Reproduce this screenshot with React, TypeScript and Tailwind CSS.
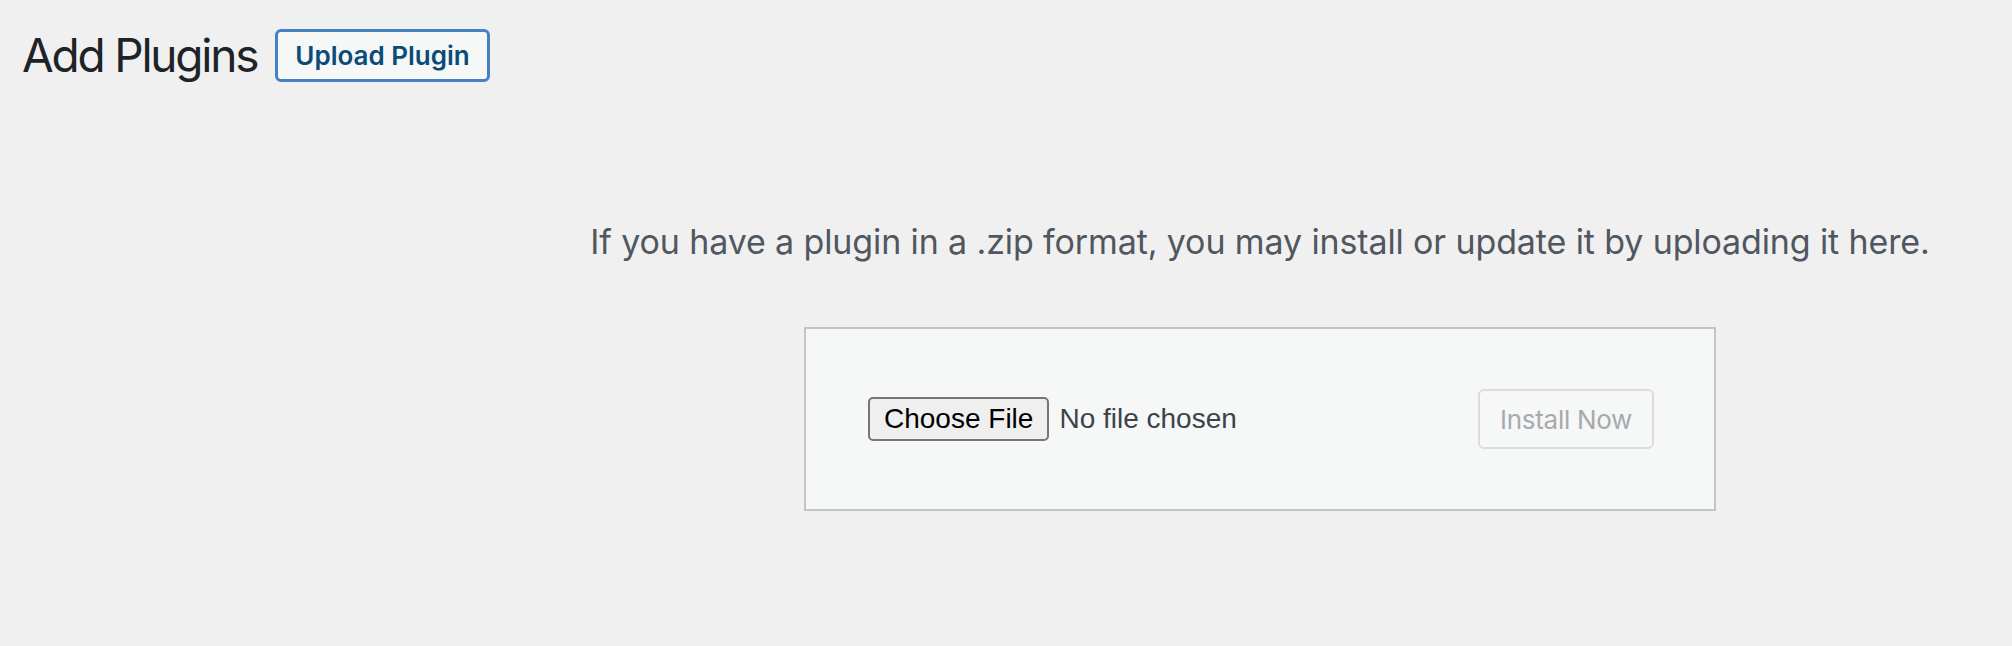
export default function App() {
  return (
    <div className="min-h-screen bg-[#f0f0f1] font-['Inter','Noto_Sans',sans-serif] text-[#3c434a]">
      <div className="flex items-center pl-[22px] pt-[25px]">
        <h1 className="text-[46px] font-normal leading-[60px] tracking-[-2.2px] text-[#1d2327]">Add Plugins</h1>
        <button
          type="button"
          className="ml-[18px] rounded-[6px] border-[3px] border-[#4582c3] bg-[#f6f7f7] px-[17px] py-[8px] text-[26px] font-semibold leading-[31px] text-[#0a4b78]"
        >
          Upload Plugin
        </button>
      </div>

      <div className="mt-[131px] flex flex-col items-center pl-[508px]">
        <p className="text-[34px] leading-[51px] tracking-[-0.12px] text-[#50575e]">
          If you have a plugin in a .zip format, you may install or update it by uploading it here.
        </p>

        <form className="mt-[60px] flex w-[912px] items-center justify-between border-2 border-[#c3c4c7] bg-[#f6f7f7] p-[60px]">
          <div className="flex items-center font-['Liberation_Sans',Arial,sans-serif] text-[28px]">
            <span className="ml-[2px] flex h-[44px] items-center rounded-[5px] border-2 border-[#767676] bg-[#efefef] px-[14px] text-black">
              Choose File
            </span>
            <span className="ml-[10px] text-[#3c434a]">No file chosen</span>
          </div>
          <button
            type="button"
            disabled
            className="h-[60px] rounded-[6px] border-2 border-[#dcdcde] bg-[#f6f7f7] px-[20px] text-[26px] tracking-[-0.3px] text-[#a7aaad]"
          >
            Install Now
          </button>
        </form>
      </div>
    </div>
  );
}
